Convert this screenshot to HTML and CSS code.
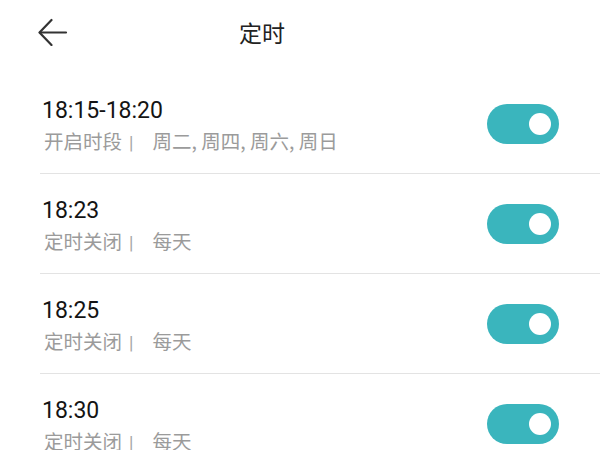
FILE: index.html
```html
<!DOCTYPE html>
<html lang="zh">
<head>
<meta charset="utf-8">
<link rel="stylesheet" href="styles.css">
</head>
<body>
<header class="topbar">
  <span class="back">
    <svg width="30" height="28" viewBox="0 0 30 28" fill="none" stroke="#333" stroke-width="2.2" stroke-linecap="round" stroke-linejoin="round">
      <path d="M28 14.5H2"/>
      <path d="M13.5 2L1.5 14.5L13.5 27"/>
    </svg>
  </span>
  <h1 class="title">定时</h1>
</header>
<ul class="list">
  <li class="row">
    <div class="info">
      <div class="time">18:15-18:20</div>
      <div class="desc">开启时段<span class="bar">|</span>周二, 周四, 周六, 周日</div>
    </div>
    <span class="switch"><span class="knob"></span></span>
  </li>
  <li class="row">
    <div class="info">
      <div class="time">18:23</div>
      <div class="desc">定时关闭<span class="bar">|</span>每天</div>
    </div>
    <span class="switch"><span class="knob"></span></span>
  </li>
  <li class="row">
    <div class="info">
      <div class="time">18:25</div>
      <div class="desc">定时关闭<span class="bar">|</span>每天</div>
    </div>
    <span class="switch"><span class="knob"></span></span>
  </li>
  <li class="row">
    <div class="info">
      <div class="time">18:30</div>
      <div class="desc">定时关闭<span class="bar">|</span>每天</div>
    </div>
    <span class="switch"><span class="knob"></span></span>
  </li>
</ul>
</body>
</html>
```
FILE: styles.css
```css
html, body {
  margin: 0;
  padding: 0;
  background: #fff;
  overflow: hidden;
}
body {
  font-family: Roboto, "Noto Sans CJK SC", sans-serif;
  width: 600px;
  height: 450px;
}
.topbar {
  height: 74px;
  display: flex;
  align-items: flex-start;
  padding-left: 38px;
  box-sizing: border-box;
}
.back {
  display: block;
  line-height: 0;
  margin-top: 18px;
}
.title {
  margin: 0 0 0 171px;
  padding-top: 16px;
  font-size: 23px;
  font-weight: 400;
  color: #222;
  line-height: 32px;
  font-family: "Noto Sans CJK SC", sans-serif;
}
.list {
  list-style: none;
  margin: 0;
  padding: 0 0 0 40px;
}
.row {
  height: 99px;
  border-bottom: 1.5px solid #e3e3e3;
  display: flex;
  align-items: center;
  justify-content: space-between;
  padding-right: 41px;
}
.info {
  display: flex;
  flex-direction: column;
  padding-left: 2px;
  padding-top: 5px;
}
.time {
  font-size: 23px;
  line-height: 30px;
  color: #141414;
}
.desc {
  font-family: "Noto Sans CJK SC", sans-serif;
  font-size: 19.5px;
  line-height: 29px;
  color: #9b9b9b;
  padding-left: 2px;
}
.bar {
  font-family: Roboto, sans-serif;
  font-size: 18px;
  margin: 0 19px 0 7px;
  color: #a5a5a5;
}
.switch {
  width: 72px;
  height: 40px;
  border-radius: 20px;
  background: #3ab5bd;
  position: relative;
  flex: none;
}
.knob {
  position: absolute;
  right: 8px;
  top: 9px;
  width: 22px;
  height: 22px;
  border-radius: 50%;
  background: #fff;
}
```
